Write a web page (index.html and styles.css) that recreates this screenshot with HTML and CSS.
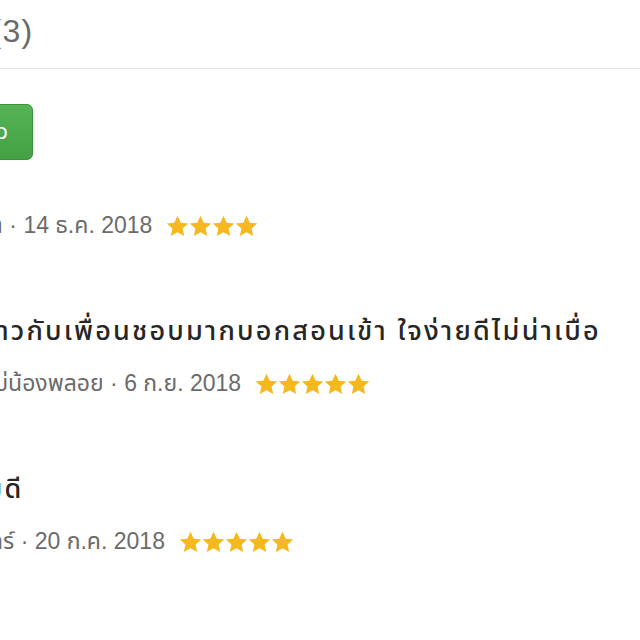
FILE: index.html
```html
<!DOCTYPE html>
<html lang="th">
<head>
    <meta charset="UTF-8">
    <meta name="viewport" content="width=device-width, initial-scale=1.0">
    <title>รีวิว</title>
    <link rel="stylesheet" href="styles.css">
</head>
<body>
    <svg class="defs" width="0" height="0" aria-hidden="true">
        <symbol id="star" viewBox="0 0 24 24">
            <polygon points="12,0.8 15.4,8 23.2,8.8 17.3,14.1 19,21.9 12,17.9 5,21.9 6.7,14.1 0.8,8.8 8.6,8"/>
        </symbol>
    </svg>

    <div class="page">
        <div class="reviews-header">
            <h2>รีวิวผู้ใช้ (3)</h2>
        </div>

        <button class="write-btn">เขียนรีวิว</button>

        <div class="review-list">
            <div class="review">
                <div class="meta">
                    <span>คุณครูแอนนา · 14 ธ.ค. 2018</span>
                    <span class="stars">
                        <svg><use href="#star"/></svg><svg><use href="#star"/></svg><svg><use href="#star"/></svg><svg><use href="#star"/></svg>
                    </span>
                </div>
            </div>

            <div class="review">
                <div class="title">ซื้อให้ลูกสาวกับเพื่อนชอบมากบอกสอนเข้า ใจง่ายดีไม่น่าเบื่อ</div>
                <div class="meta">
                    <span>ครอบครัว, แม่น้องพลอย · 6 ก.ย. 2018</span>
                    <span class="stars">
                        <svg><use href="#star"/></svg><svg><use href="#star"/></svg><svg><use href="#star"/></svg><svg><use href="#star"/></svg><svg><use href="#star"/></svg>
                    </span>
                </div>
            </div>

            <div class="review">
                <div class="title">ใช้งานง่ายดี</div>
                <div class="meta">
                    <span>คุณป้าวันจันทร์ · 20 ก.ค. 2018</span>
                    <span class="stars">
                        <svg><use href="#star"/></svg><svg><use href="#star"/></svg><svg><use href="#star"/></svg><svg><use href="#star"/></svg><svg><use href="#star"/></svg>
                    </span>
                </div>
            </div>
        </div>
    </div>
</body>
</html>
```

FILE: styles.css
```css
html, body {
    margin: 0;
    background: #ffffff;
    overflow: hidden;
}
body {
    font-family: "Liberation Sans", "Noto Sans Thai", "Noto Sans", sans-serif;
    color: #333;
}
.defs {
    position: absolute;
}
.page {
    margin-left: -121px; /* page is scrolled sideways */
}
.reviews-header {
    height: 64px;
    padding-bottom: 4px;
    border-bottom: 1px solid #e2e2e2;
    display: flex;
    align-items: center;
}
.reviews-header h2 {
    margin: 0;
    font-size: 32px;
    font-weight: normal;
    letter-spacing: 1.2px;
    color: #6a6a6a;
}
.write-btn {
    display: block;
    margin-top: 35px;
    height: 56px;
    padding: 0 22px 0 42px;
    font-family: inherit;
    font-size: 22px;
    letter-spacing: 1.5px;
    color: #fff;
    background: linear-gradient(#56b356, #43a043);
    border: 1px solid #3c913c;
    border-radius: 6px;
}
.review-list {
    margin-top: 48px;
}
.review {
    margin-bottom: 69px;
}
.title {
    font-size: 27px;
    font-weight: 500;
    letter-spacing: 2.2px;
    line-height: 36px;
    color: #262626;
    margin-bottom: 17px;
    white-space: nowrap;
}
.meta {
    display: flex;
    align-items: center;
    gap: 14px;
    height: 36px;
    font-size: 23px;
    color: #6b6b6b;
    white-space: nowrap;
}
.stars {
    display: flex;
}
.stars svg {
    width: 23px;
    height: 23px;
    fill: #f6b81f;
}
```
